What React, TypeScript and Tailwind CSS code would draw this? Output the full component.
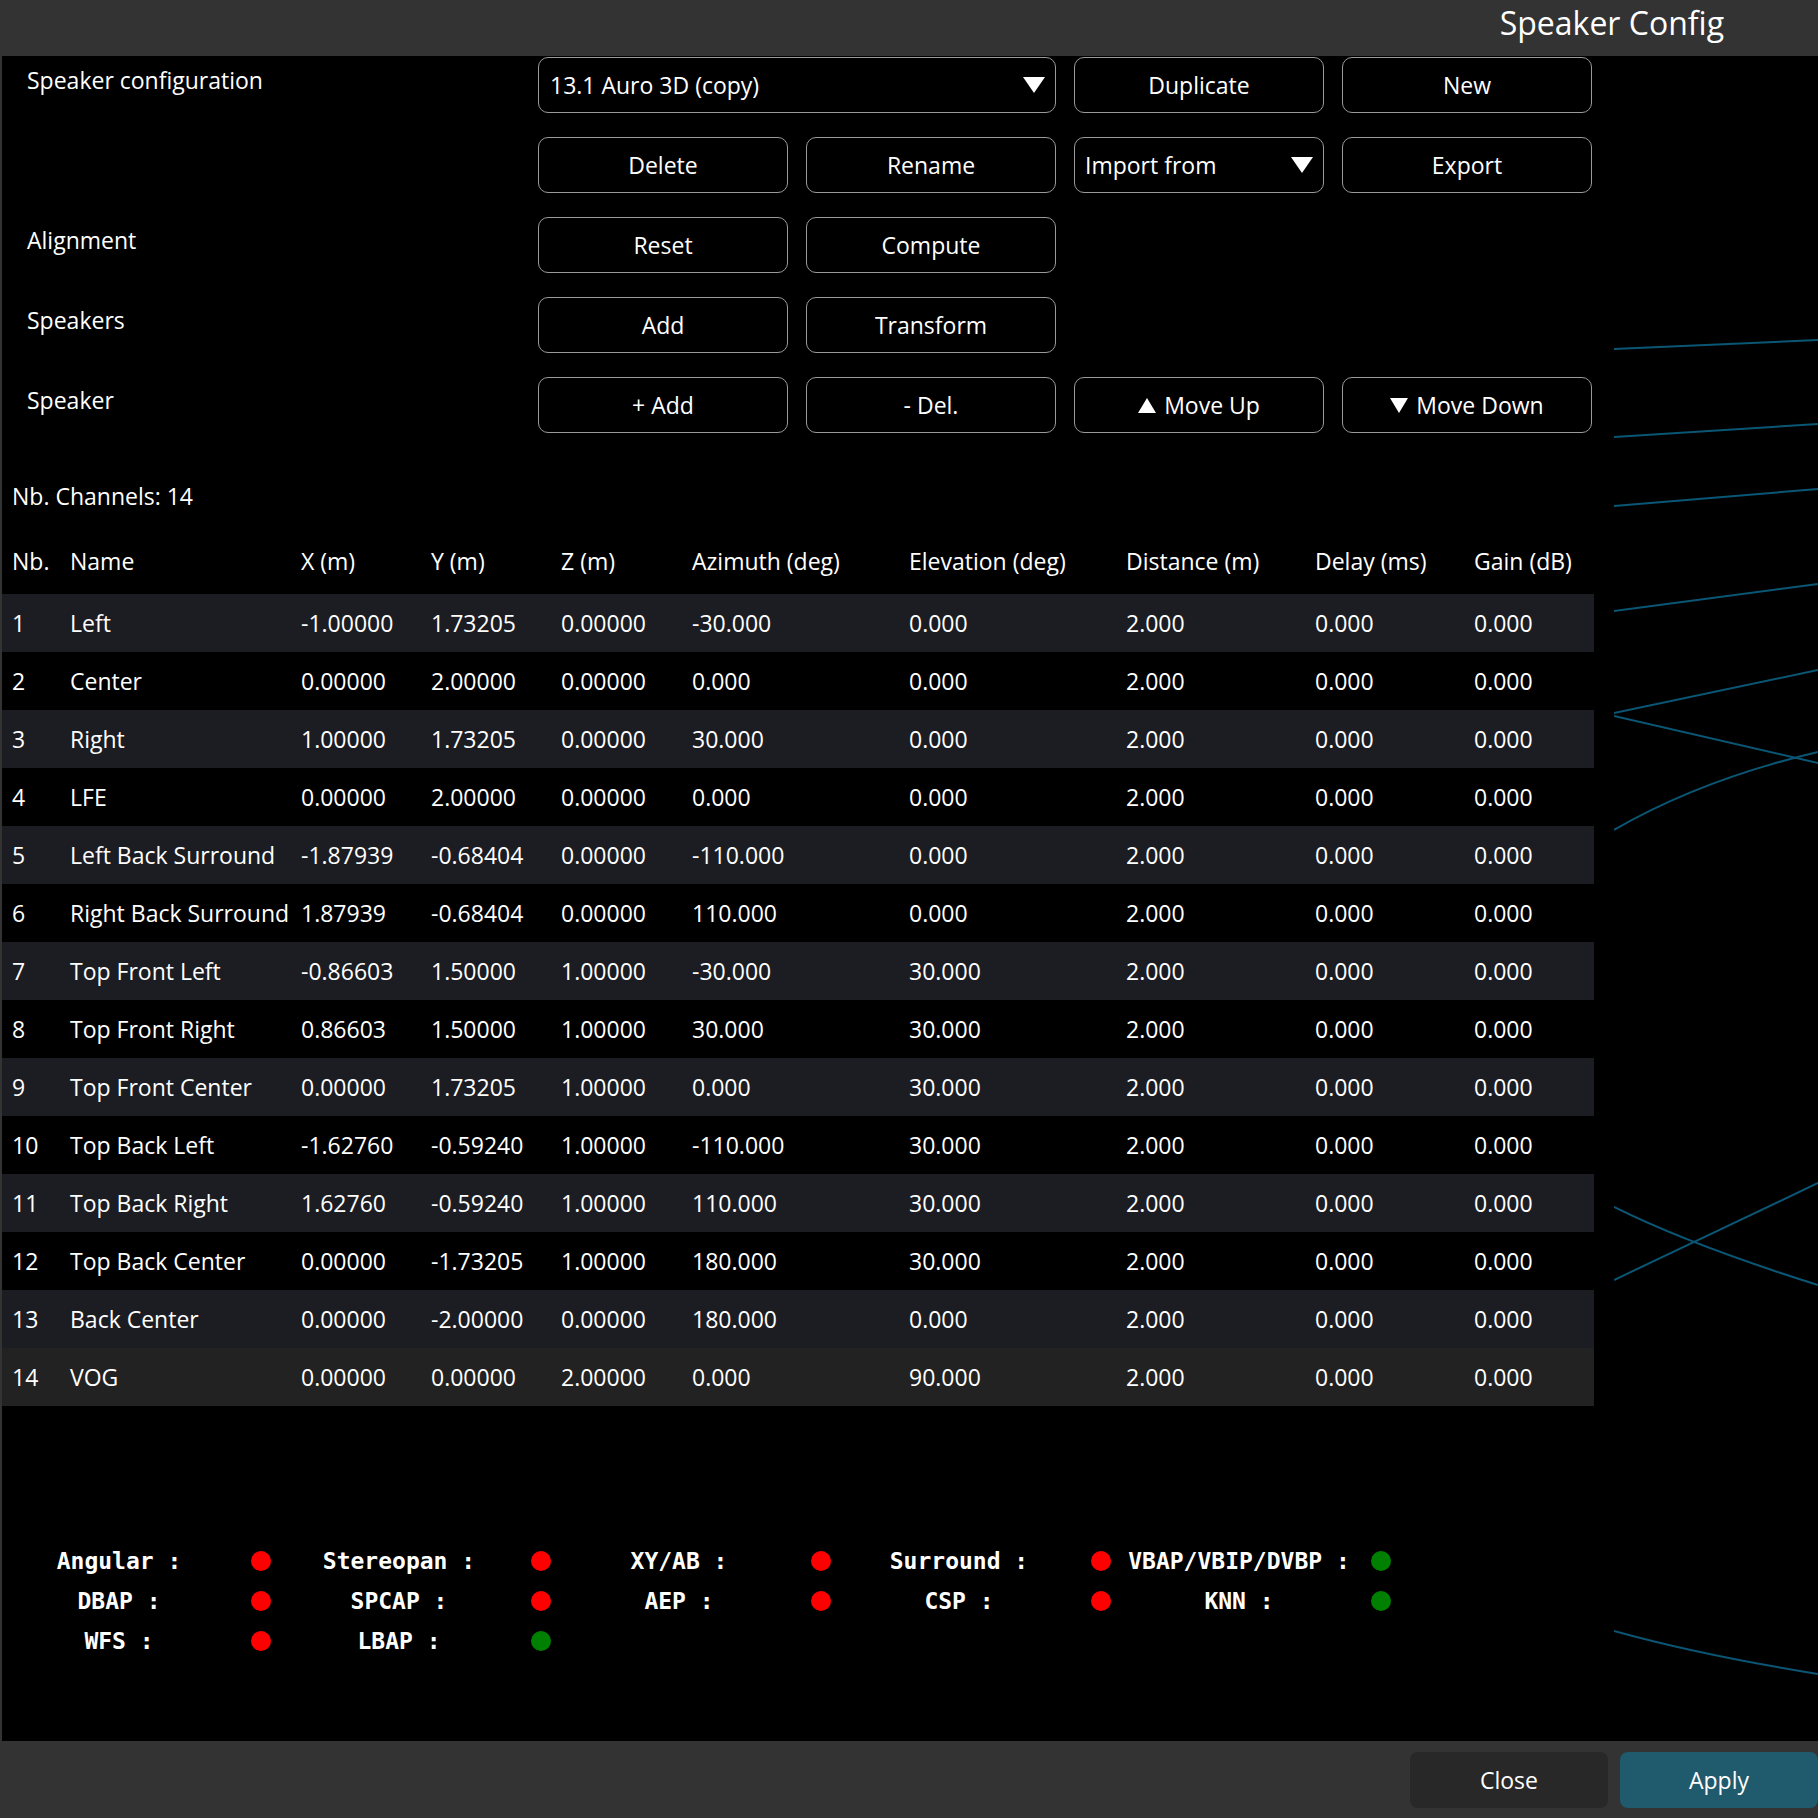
import React from "react";

type Row = [string, string, string, string, string, string, string, string, string, string];

const rows: Row[] = [
  ["1", "Left", "-1.00000", "1.73205", "0.00000", "-30.000", "0.000", "2.000", "0.000", "0.000"],
  ["2", "Center", "0.00000", "2.00000", "0.00000", "0.000", "0.000", "2.000", "0.000", "0.000"],
  ["3", "Right", "1.00000", "1.73205", "0.00000", "30.000", "0.000", "2.000", "0.000", "0.000"],
  ["4", "LFE", "0.00000", "2.00000", "0.00000", "0.000", "0.000", "2.000", "0.000", "0.000"],
  ["5", "Left Back Surround", "-1.87939", "-0.68404", "0.00000", "-110.000", "0.000", "2.000", "0.000", "0.000"],
  ["6", "Right Back Surround", "1.87939", "-0.68404", "0.00000", "110.000", "0.000", "2.000", "0.000", "0.000"],
  ["7", "Top Front Left", "-0.86603", "1.50000", "1.00000", "-30.000", "30.000", "2.000", "0.000", "0.000"],
  ["8", "Top Front Right", "0.86603", "1.50000", "1.00000", "30.000", "30.000", "2.000", "0.000", "0.000"],
  ["9", "Top Front Center", "0.00000", "1.73205", "1.00000", "0.000", "30.000", "2.000", "0.000", "0.000"],
  ["10", "Top Back Left", "-1.62760", "-0.59240", "1.00000", "-110.000", "30.000", "2.000", "0.000", "0.000"],
  ["11", "Top Back Right", "1.62760", "-0.59240", "1.00000", "110.000", "30.000", "2.000", "0.000", "0.000"],
  ["12", "Top Back Center", "0.00000", "-1.73205", "1.00000", "180.000", "30.000", "2.000", "0.000", "0.000"],
  ["13", "Back Center", "0.00000", "-2.00000", "0.00000", "180.000", "0.000", "2.000", "0.000", "0.000"],
  ["14", "VOG", "0.00000", "0.00000", "2.00000", "0.000", "90.000", "2.000", "0.000", "0.000"],
];

const headers = ["Nb.", "Name", "X (m)", "Y (m)", "Z (m)", "Azimuth (deg)", "Elevation (deg)", "Distance (m)", "Delay (ms)", "Gain (dB)"];

const cols = "grid grid-cols-[58px_231px_130px_130px_131px_217px_217px_189px_159px_1fr] pl-[10px]";

// [label, ok] ; null = empty cell
const status: ([string, boolean] | null)[] = [
  ["Angular :", false], ["Stereopan :", false], ["XY/AB :", false], ["Surround :", false], ["VBAP/VBIP/DVBP :", true],
  ["DBAP :", false], ["SPCAP :", false], ["AEP :", false], ["CSP :", false], ["KNN :", true],
  ["WFS :", false], ["LBAP :", true], null, null, null,
];

const Caret = () => (
  <svg width="22" height="16" viewBox="0 0 22 16" className="shrink-0">
    <polygon points="0,0 22,0 11,16" fill="white" />
  </svg>
);

const Btn = ({ children, className = "" }: { children: React.ReactNode; className?: string }) => (
  <div
    className={`h-[56px] w-[250px] rounded-[10px] border border-[#9a9a9a] flex items-center justify-center gap-[8px] text-white ${className}`}
  >
    {children}
  </div>
);

const Label = ({ text }: { text?: string }) => (
  <div className="w-[518px] pl-[25px] pt-[8px] self-start">{text}</div>
);

export default function App() {
  return (
    <div
      className="w-[1818px] h-[1818px] flex flex-col bg-[#333333] text-white text-[23px] leading-[30px]"
      style={{ fontFamily: "'Open Sans', 'Noto Sans', sans-serif" }}
    >
      {/* title bar */}
      <div className="h-[56px] shrink-0 flex items-center justify-end pr-[94px] pb-[10px]">
        <span className="text-[32px] leading-[40px]">Speaker Config</span>
      </div>

      <div className="flex-1 flex ml-[2px] bg-black overflow-hidden">
        {/* left panel */}
        <div className="w-[1612px] shrink-0 flex flex-col">
          <div className="flex flex-col gap-[24px] mt-[1px]">
            <div className="flex gap-[18px]">
              <Label text="Speaker configuration" />
              <div className="h-[56px] w-[518px] rounded-[10px] border border-[#9a9a9a] flex items-center justify-between pl-[11px] pr-[10px]">
                <span>13.1 Auro 3D (copy)</span>
                <Caret />
              </div>
              <Btn>Duplicate</Btn>
              <Btn>New</Btn>
            </div>
            <div className="flex gap-[18px]">
              <Label />
              <Btn>Delete</Btn>
              <Btn>Rename</Btn>
              <div className="h-[56px] w-[250px] rounded-[10px] border border-[#9a9a9a] flex items-center justify-between pl-[10px] pr-[10px]">
                <span>Import from</span>
                <Caret />
              </div>
              <Btn>Export</Btn>
            </div>
            <div className="flex gap-[18px]">
              <Label text="Alignment" />
              <Btn>Reset</Btn>
              <Btn>Compute</Btn>
            </div>
            <div className="flex gap-[18px]">
              <Label text="Speakers" />
              <Btn>Add</Btn>
              <Btn>Transform</Btn>
            </div>
            <div className="flex gap-[18px]">
              <Label text="Speaker" />
              <Btn>+ Add</Btn>
              <Btn>- Del.</Btn>
              <Btn>
                <svg width="18" height="15" viewBox="0 0 18 15"><polygon points="9,0 18,15 0,15" fill="white" /></svg>
                <span>Move Up</span>
              </Btn>
              <Btn>
                <svg width="18" height="15" viewBox="0 0 18 15"><polygon points="0,0 18,0 9,15" fill="white" /></svg>
                <span>Move Down</span>
              </Btn>
            </div>
          </div>

          <div className="mt-[48px] pl-[10px]">Nb. Channels: 14</div>

          {/* table */}
          <div className="w-[1592px] mt-[21px]">
            <div className={`${cols} h-[58px] items-center`}>
              {headers.map((h) => (
                <div key={h} className="whitespace-nowrap">{h}</div>
              ))}
            </div>
            <div className="mt-[4px]">
              {rows.map((r, i) => (
                <div
                  key={r[0]}
                  className={`${cols} h-[58px] items-center ${
                    i === 13 ? "bg-[#222222]" : i % 2 === 0 ? "bg-[#1b1d23]" : "bg-black"
                  }`}
                >
                  {r.map((c, j) => (
                    <div key={j} className="whitespace-nowrap">{c}</div>
                  ))}
                </div>
              ))}
            </div>
          </div>

          {/* renderer availability */}
          <div
            className="mt-[135px] ml-[2px] grid grid-cols-[280px_280px_280px_280px_280px] font-bold text-[23px]"
            style={{ fontFamily: "'DejaVu Sans Mono', monospace" }}
          >
            {status.map((s, i) =>
              s ? (
                <div key={i} className="h-[40px] flex items-center">
                  <div className="w-[230px] text-center whitespace-pre">{s[0]}</div>
                  <div className={`ml-[17px] w-[20px] h-[20px] rounded-full ${s[1] ? "bg-[#008000]" : "bg-[#ff0000]"}`} />
                </div>
              ) : (
                <div key={i} className="h-[40px]" />
              )
            )}
          </div>
        </div>

        {/* 3D view, mostly hidden behind the panel */}
        <div className="flex-1 relative">
          <svg width="204" height="1685" viewBox="1614 56 204 1685" className="block">
            <g stroke="#0a5675" strokeWidth="2" fill="none">
              <path d="M1614 349 L1818 340" />
              <path d="M1614 437 L1818 424" />
              <path d="M1614 506 L1818 489" />
              <path d="M1614 611 L1818 584" />
              <path d="M1614 713 L1818 670" />
              <path d="M1614 716 L1818 763" />
              <path d="M1614 830 Q1700 780 1818 752" />
              <path d="M1614 1207 Q1690 1245 1818 1285" />
              <path d="M1614 1280 L1818 1183" />
              <path d="M1614 1631 Q1700 1655 1818 1674" />
            </g>
          </svg>
        </div>
      </div>

      {/* footer */}
      <div className="h-[77px] shrink-0 flex items-start justify-end gap-[12px] pt-[11px]">
        <div className="w-[198px] h-[56px] rounded-[8px] bg-[#282828] flex items-center justify-center">Close</div>
        <div className="w-[198px] h-[56px] rounded-[8px] bg-[#1f5a6d] flex items-center justify-center">Apply</div>
      </div>
    </div>
  );
}
